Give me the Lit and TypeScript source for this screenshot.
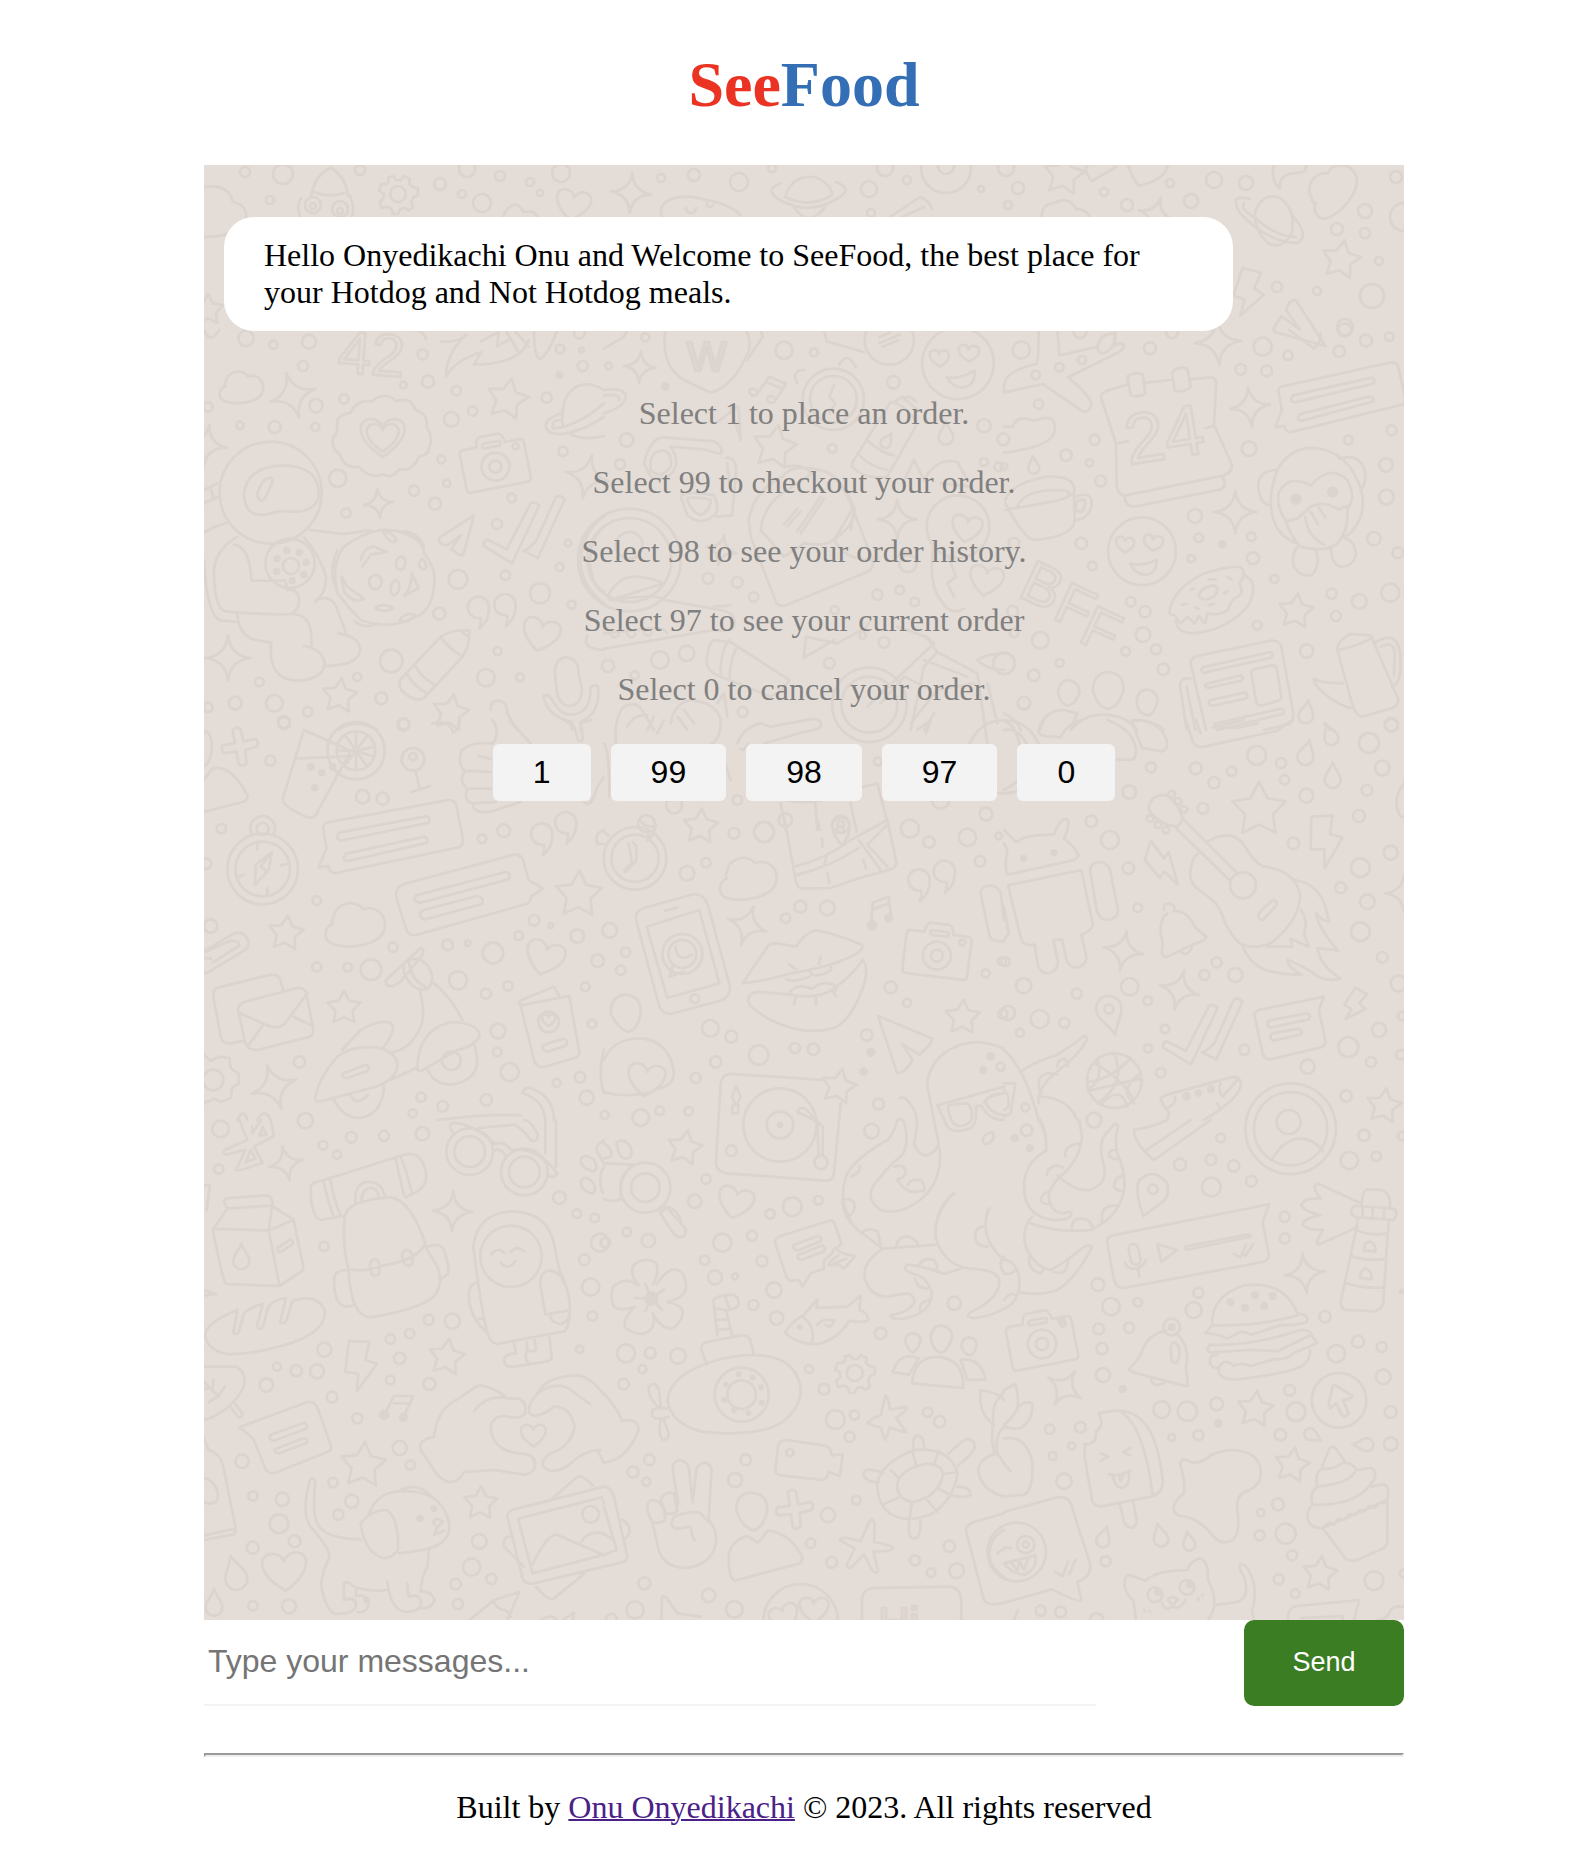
import { LitElement, html, svg, css } from "lit";
import { customElement, property, state } from "lit/decorators.js";

type Num = number[];
interface Tile {
  at: [number, number];
  scale?: number;
  rings: Num[];
  dots?: Num[];
  stars?: Num[];
  sparks?: Num[];
  marks?: [keyof typeof SHAPES, number, number, number, number][];
  words?: [string, number, number, number, number][];
  paths?: string[];
}

// Doodles drawn round their own centre, placed with x, y, turn and scale.
const SHAPES = {
  heart: "M0 45C-66 2-58-40-30-42C-12-43-2-32 0-22C2-32 12-43 30-42C58-40 66 2 0 45Z",
  drop: "M0-34C6-14 22-2 22 14A22 22 0 0 1-22 14C-22-2-6-14 0-34Z",
  bolt: "M-30-74L30-70L16-18L50-4L-12 74L-6 22L-44 16Z",
  quote: "M-2 26A32 32 0 1 1 31-4Q32 34 2 58Q8 44 6 26Z",
  camera:
    "M-85-55H-45Q-42-84-28-84H25Q38-84 42-55H85Q98-55 98-42V62Q98 75 85 75H-85Q-98 75-98 62V-42Q-98-55-85-55ZM-42 12A42 42 0 1 0 42 12A42 42 0 1 0-42 12ZM-18 12A18 18 0 1 0 18 12A18 18 0 1 0-18 12ZM-22-62H22Q28-62 28-56Q28-48 22-48H-22Q-28-48-28-56Q-28-62-22-62ZM62-36A9 9 0 1 0 80-36A9 9 0 1 0 62-36Z",
  cloud: "M-60 14C-84 22-92 66-52 74C-6 84 84 70 90 16C92-24 56-46 26-32C-2-62-54-48-60-4C-64 0-64 8-60 14Z",
  note: "M-34 34L-22-34L40-36L30 32M-24-14L36-16M-34 34A14 11 0 1 1-62 34A14 11 0 1 1-34 34M30 32A14 11 0 1 1 2 32A14 11 0 1 1 30 32",
  face: "M-96 0A96 96 0 1 0 96 0A96 96 0 1 0-96 0ZM-48 4C-84-20-76-42-60-42C-52-42-48-34-48-30C-44-42-22-42-22-24C-22-10-38-2-48 4ZM30-2C-4-24 2-48 20-48C28-48 30-38 32-34C36-46 60-46 60-28C60-14 42-6 30-2ZM-34 34Q0 44 42 24Q40 66 6 66Q-22 62-34 34Z",
  gear: "M-14-54L-6-42H8L18-54L36-46L34-30L46-20L60-18V4L46 10L40 24L46 40L32 50L18 42L6 46L0 60H-16L-20 44L-34 38L-50 42L-56 24L-44 14V-2L-58-10L-52-30L-36-30L-28-38L-30-50ZM-24 0A24 24 0 1 0 24 0A24 24 0 1 0-24 0Z",
  chat: "M-186-40Q-192-58-170-62L166-124Q186-126 190-110L208-14Q210 6 194 10L-150 82Q-170 84-172 62L-200 66L-178 12ZM-142-32L102-78Q118-78 112-60L-136-10Q-156-14-142-32ZM-124 28L96-20Q112-18 108-4L-116 48Q-136 48-124 28Z",
  plane: "M-70 16L50-62L14 70Q8 78-2 72L-28 54L6 6L-44 42Q-74 34-70 16Z",
  ticks: "M-118 56Q-122 42-108 36L-50 66L22-72Q34-80 48-66L-34 108ZM12 66L38 42L98-92Q112-98 124-84L44 92L0 70Z",
  pin: "M0 66C-10 26-44 8-42-26A42 42 0 0 1 42-26C44 8 10 26 0 66ZM-15-24A15 15 0 1 0 15-24A15 15 0 1 0-15-24Z",
  cross: "M-12-48Q-2-60 10-48L12-12L46-14Q56-4 46 8L12 12L10 48Q0 58-12 48L-12 12L-46 10Q-56 0-46-12L-12-12Z",
};

function starPath(x: number, y: number, r: number, turn: number): string {
  const pts: string[] = [];
  for (let i = 0; i < 10; i++) {
    const a = ((turn + i * 36 - 90) * Math.PI) / 180;
    const d = i % 2 ? r * 0.52 : r;
    pts.push(`${(x + d * Math.cos(a)).toFixed(1)} ${(y + d * Math.sin(a)).toFixed(1)}`);
  }
  return `M${pts.join("L")}Z`;
}

const sparkPath = (r: number) => {
  const k = r * 0.1;
  return `M0 ${-r}Q${k} ${-k} ${r} 0Q${k} ${k} 0 ${r}Q${-k} ${k} ${-r} 0Q${-k} ${-k} 0 ${-r}Z`;
};

const TILES: Tile[] = [
  {
    at: [0, 0],
    scale: 1,
    rings: [
      [41, 7, 5], [79, 9, 10], [66, 35, 4], [156, 5, 5], [236, 19, 6], [258, 29, 4], [278, 38, 9], [263, 4, 8],
      [296, 11, 5], [326, 17, 4], [357, 8, 9], [336, 28, 3], [457, 13, 4], [490, 10, 6], [535, 17, 9], [568, 3, 4],
      [665, 24, 8], [681, 3, 8], [703, 15, 4], [742, 3, 25], [742, 1, 8], [802, 3, 8], [777, 24, 3], [814, 23, 6],
      [804, 40, 4], [667, 48, 4], [966, 18, 4], [1010, 15, 8], [900, 27, 4], [923, 40, 6], [987, 36, 7], [1042, 18, 7],
      [1192, 12, 6], [1161, 46, 7], [1133, 64, 6], [1161, 68, 5], [1175, 96, 4], [1073, 122, 5], [1113, 126, 4],
      [1168, 131, 12], [1141, 162, 8], [1200, 52, 14], [109, 40, 8], [109, 41, 3], [136, 44, 8], [136, 46, 3],
    ],
    stars: [[860, 10, 21, 8], [1137, 95, 20, 10], [4, 145, 16, 0]],
    sparks: [[427, 28, 20, 4], [952, 50, 18, 15]],
    marks: [
      ["gear", 194, 29, 0, 0.33], ["heart", 369, 40, 10, 0.34], ["cloud", 1124, 22, -40, 0.33],
      ["bolt", 1044, 128, 10, 0.32], ["plane", 1098, 162, 90, 0.38], ["heart", 941, 4, 20, 0.4],
    ],
    paths: [
      "M0 22Q24 18 29 37Q44 40 42 55Q32 72 0 72",
      "M107 31Q112 8 127 3Q142 12 144 31M110 27Q126 34 143 27M97 33Q92 40 96 52M146 31Q152 44 147 54",
      "M582 30A24 24 0 0 1 628 28M581 32Q605 44 628 30M577 18Q560 24 574 34Q605 52 634 33Q650 24 632 17M590 42Q605 64 621 42",
      "M458 52C452 34 476 28 498 34C524 38 542 50 536 54M482 43A5 5 0 1 0 492 43M503 38A3 3 0 1 0 509 40",
      "M298 54Q304 38 314 40L320 47Q332 44 334 54M686 52L716 32Q724 34 728 44M698 52L720 42",
      "M838 54Q836 40 850 38Q864 30 872 44Q884 44 886 54M884 0Q878 4 888 16L912 2M1070 0Q1066 14 1076 24Q1074 10 1090 8Q1104 8 1102 0",
      "M1051 47Q1058 28 1074 32Q1092 42 1088 68Q1078 86 1064 78Q1050 66 1051 47M1046 34Q1024 28 1036 48Q1064 78 1094 78Q1106 70 1088 50M1040 38Q1036 44 1050 52Q1072 72 1092 72",
    ],
  },
  {
    at: [0, 165],
    rings: [
      [126, 25, 23], [208, 44, 12], [315, 35, 21], [297, 108, 15], [336, 227, 20], [12, 231, 14], [108, 286, 11],
      [212, 291, 18], [334, 291, 12], [420, 207, 14], [656, 73, 15], [598, 165, 10], [672, 155, 18], [757, 182, 14],
      [1028, 203, 15], [806, 243, 14], [742, 268, 22], [1068, 57, 13], [1132, 60, 7], [1136, 108, 15], [1077, 364, 14],
      [712, 388, 12], [728, 460, 11], [630, 482, 15], [693, 521, 18], [426, 549, 14], [401, 445, 26], [923, 504, 13],
      [879, 582, 15], [1092, 639, 10], [1067, 711, 12], [904, 736, 14], [762, 748, 28], [1008, 790, 30], [1103, 824, 12],
      [706, 851, 18], [881, 963, 12], [846, 1043, 26], [948, 1042, 12], [562, 993, 34], [460, 1041, 12], [532, 1105, 18],
      [166, 1056, 13], [94, 1119, 19], [211, 1120, 25], [311, 1145, 14], [240, 1176, 18], [600, 1182, 16], [12, 1132, 14],
      [1126, 10, 16], [200, 488, 153], [261, 708, 24], [258, 700, 74],
    ],
    dots: [
      [1067, 136, 12], [248, 661, 11], [286, 667, 11], [219, 686, 11], [306, 697, 11], [218, 724, 11], [299, 734, 11],
      [265, 752, 11],
    ],
    stars: [[910, 208, 64, 12], [407, 1098, 54, 6], [740, 1148, 56, 10]],
    sparks: [[266, 196, 70, -16], [8, 345, 60, 8], [524, 520, 44, -6], [1150, 440, 66, 12], [72, 984, 68, 0]],
    marks: [
      ["cloud", 110, 162, 4, 0.76], ["camera", 872, 398, -11, 1], ["heart", 536, 322, 0, 1.3], ["heart", 536, 322, 0, 0.95],
      ["plane", 766, 610, 0, 0.88], ["ticks", 958, 592, 0, 1], ["quote", 824, 838, 0, 1], ["quote", 904, 830, 0, 1],
      ["heart", 1010, 914, 14, 1.1],
    ],
    words: [["42", 498, 134, 180, 4]],
    paths: [
      "M0 0Q12 30 30 20L46 0M622 0Q660 0 666 28M710 34Q760 40 786 14Q724 74 726 140Q748 94 832 66L810 104Q950 102 974 30M830 34L884 6L880 48L920 26L940 62M904 0L940 60M930 0L974 50M990 0Q990 88 1010 86Q1034 70 1060 0",
      "M540 198Q564 198 576 214Q620 198 634 240Q672 250 668 290Q690 330 676 350Q676 376 646 378Q626 426 586 418Q560 450 536 432Q500 450 464 410Q420 416 410 376Q376 350 390 318Q400 312 400 290Q392 256 440 248Q460 206 504 214Q520 198 540 198Z",
      "M120 490Q130 408 240 406Q350 410 344 500Q330 550 260 544Q220 540 188 554Q120 562 120 490ZM160 490Q176 444 198 442Q214 448 198 472L182 506Q164 524 160 490ZM0 480L40 460M0 520L44 500M20 474L30 506",
      "M0 608Q30 588 66 580M100 620Q34 660 30 720Q30 840 66 844Q200 856 260 852Q290 840 284 800Q280 776 250 780L244 752L142 752Q138 650 90 644M316 600L420 612L500 600M300 622Q350 680 366 740Q366 790 334 816M336 810Q384 790 400 840L426 908M404 910Q470 920 468 964Q458 1006 366 1008M100 852Q104 930 180 934L202 938Q190 1046 276 1052Q358 1050 362 1000Q356 956 300 948M260 852Q324 850 322 930L322 948M0 690Q10 880 60 872L98 876",
      "M420 650Q540 560 640 630Q660 650 660 670Q700 720 690 770Q680 850 630 862Q560 902 470 870Q430 830 400 790Q380 700 420 650ZM400 660Q370 730 400 780M470 690Q480 650 510 650L548 666L500 674L474 710M536 602Q560 602 578 630Q560 650 536 602M600 604Q640 606 660 650M412 740L430 770L480 806Q450 824 420 784ZM514 834Q540 814 568 836Q540 850 514 834M624 730L644 774L600 798Q624 770 624 730M450 872Q480 900 520 880M586 872Q604 844 634 856Q610 884 586 872",
      "M495 756A18 20 0 1 0 533 756A18 20 0 1 0 495 756M576 698A14 20 10 1 0 604 702A14 20 10 1 0 576 698M561 770A12 22 10 1 0 585 776A12 22 10 1 0 561 770M644 702Q656 670 668 710Q656 730 644 702",
      "M588 1050L710 920Q750 896 796 902Q800 940 776 980L660 1104Q640 1116 610 1096Q580 1076 588 1050ZM710 922Q740 960 776 980M634 1008Q650 1040 694 1066M610 1034Q630 1070 670 1090M776 908L792 920",
      "M1200 180Q1130 140 1090 196Q1070 230 1076 290M1076 248Q1010 270 1030 300Q1050 322 1110 304Q1160 290 1200 260M1070 270Q1040 270 1048 296Q1120 290 1200 220M1092 308Q1130 334 1200 318",
      "M1200 560Q1130 610 1130 700Q1134 770 1200 820M1200 590Q1160 620 1158 700Q1164 770 1200 786M1150 916Q1130 956 1200 960",
      "M1052 1020Q1060 980 1090 982Q1124 990 1124 1030L1134 1080Q1130 1126 1096 1128Q1066 1126 1058 1084ZM1018 1098Q1030 1090 1042 1106Q1080 1180 1140 1140Q1160 1120 1160 1072Q1170 1060 1182 1070Q1190 1150 1130 1176V1200M1018 1098Q1030 1160 1104 1176V1200M860 1140Q860 1110 884 1112Q910 1116 910 1150L940 1200M400 1200Q460 1164 520 1200",
    ],
  },
  {
    at: [400, 165],
    rings: [
      [124, 22, 12], [540, 61, 26], [630, 67, 12], [868, 157, 19], [68, 330, 20], [48, 403, 15], [14, 108, 10],
      [685, 355, 13], [1140, 287, 20], [1140, 396, 12], [1184, 410, 13], [312, 745, 16], [400, 757, 16], [449, 801, 14],
      [820, 794, 15], [887, 780, 13], [932, 816, 13], [840, 937, 16], [776, 916, 10], [676, 1000, 16], [168, 990, 26],
      [248, 970, 23], [12, 1008, 18], [92, 1036, 12], [416, 1146, 15], [400, 1410, 14], [1146, 1452, 19], [210, 1426, 24],
      [822, 1295, 12], [688, 208, 92], [688, 208, 70], [796, 1124, 112], [796, 1124, 84], [76, 690, 154], [76, 690, 126],
      [76, 646, 40], [1198, 328, 18], [1062, 590, 94], [912, 700, 26], [692, 840, 12], [710, 1483, 26], [710, 1483, 10],
      [1200, 1280, 110], [856, 30, 74], [1010, 1410, 26], [544, 1470, 20],
    ],
    dots: [[184, 169, 13]],
    stars: [[512, 352, 68, 10], [290, 1490, 54, 4]],
    sparks: [[108, 111, 48, 4], [880, 568, 58, 0], [352, 660, 46, 12]],
    marks: [
      ["face", 1062, 100, -6, 1.12], ["drop", 1026, 308, 0, 1], ["note", 500, 176, 24, 0.9], ["heart", 1088, 596, 10, 0.9],
      ["heart", 1146, 752, 10, 1], ["drop", 850, 330, 30, 0.7], ["quote", 128, 1486, 0, 0.8],
    ],
    words: [["W", 308, 122, 126, 0]],
    paths: [
      "M826 22L860 6M826 40L886 14M836 50L884 30",
      "M184 0Q170 110 240 150L320 188Q380 170 416 100L436 60Q440 20 424 0M430 90L476 20L470 0M0 56L60 20L70 0",
      "M660 0L668 34L780 66M580 160Q560 120 600 120M706 104Q730 60 756 112M690 166L676 200L694 220L676 250",
      "M120 400Q140 320 180 322L330 334Q360 350 350 372L300 358L200 350Q220 380 216 404Q200 460 140 440ZM140 390Q150 360 180 362Q206 370 200 410Q170 450 140 420ZM230 500Q240 480 330 496Q350 540 330 556Q290 590 250 556ZM250 504Q290 500 320 510Q320 540 290 556Q256 540 250 504M366 384Q400 380 396 430L384 556L336 560M370 400L376 460M0 180Q60 170 66 200Q60 232 0 250M0 196Q50 190 46 210",
      "M550 410Q600 400 620 430M434 570Q450 480 536 440Q560 400 650 420Q700 430 740 520L806 690Q814 716 780 730L546 826Q526 832 516 816L440 620ZM470 600Q480 520 550 480L640 420Q700 420 750 530L690 630Q660 650 600 640L540 680ZM750 530Q760 580 690 628Q720 690 806 690M750 540L740 600M540 584L580 536M550 590L590 544M580 604L650 500M590 610L660 506",
      "M744 400L806 300L860 216Q900 220 940 280L850 440Q780 450 744 410ZM790 330Q830 370 870 376M766 376Q800 410 850 420M870 216L896 200L940 240M900 210Q910 190 936 214",
      "M380 230L410 330L404 230ZM400 230L340 276M896 460L930 390L960 450Q1000 380 1060 396L1090 450M880 680Q900 650 920 680M990 640Q970 760 1010 810Q1040 860 1080 836M1034 680L1056 740L1030 760L1050 800M1010 460L1100 470",
      "M20 810Q170 790 180 810L350 840Q400 850 390 890Q380 906 330 900L0 956M0 910L130 896Q180 890 190 910M330 830L380 826M20 910A12 12 0 1 0 44 910M70 910A12 12 0 1 0 94 910M120 905A12 12 0 1 0 144 905M40 760Q80 720 180 760L20 810Q0 800 40 760",
      "M330 930Q310 940 308 1000Q310 1020 340 1036L500 1100Q540 1080 556 1050L380 936ZM376 930Q350 960 350 1030M400 950Q380 980 376 1050M600 980L606 920L700 940L780 896M600 984L690 930M780 900L800 870",
      "M36 1240Q30 1160 60 1130Q100 1110 120 1150L150 1200M70 1190Q90 1150 130 1156M200 1180Q210 1120 260 1110Q340 1120 350 1170Q350 1230 320 1242M220 1160L250 1200M240 1140L270 1180M150 1160L130 1200M180 1170L160 1210M340 1120L360 1090L370 1160",
      "M400 1240Q420 1190 470 1180L500 1190L630 1166Q656 1170 650 1190Q640 1200 600 1206L480 1240M410 1256Q416 1270 430 1242",
      "M880 890L966 920L990 940L800 1120L790 1130M966 920L1000 966L960 1010L920 1200M1000 966L1120 1030L1150 1240M920 1180L1000 1080L1110 1060M960 990L1090 1040M1120 990Q1150 970 1200 970M1120 990Q1150 1020 1200 1020M980 1080L900 1040L830 1120M1150 1060L1180 1180M940 1200L980 1170L966 1210",
      "M530 1420L546 1500M540 1410Q640 1430 700 1390L820 1360L856 1500M634 1420L640 1500M740 1420L756 1500M360 1290L380 1350M960 1200L990 1150M0 1240Q16 1260 16 1400",
    ],
  },
  {
    at: [800, 165],
    rings: [
      [52, 60, 26], [234, 90, 12], [166, 112, 13], [95, 135, 13], [104, 223, 14], [438, 55, 18], [228, 4, 20],
      [504, 6, 18], [272, 329, 15], [186, 376, 17], [256, 399, 11], [290, 453, 16], [776, 50, 27], [852, 76, 14],
      [710, 118, 16], [788, 123, 16], [1006, 64, 17], [1086, 32, 18], [1156, 20, 13], [1163, 301, 15], [1033, 330, 13],
      [735, 356, 22], [1146, 405, 20], [1147, 501, 22], [573, 558, 21], [584, 623, 13], [742, 620, 13], [747, 685, 18],
      [562, 686, 11], [1110, 626, 20], [1181, 668, 16], [232, 640, 17], [265, 708, 13], [380, 815, 14], [423, 845, 17],
      [811, 747, 12], [983, 791, 15], [1066, 814, 22], [1159, 788, 27], [996, 858, 15], [760, 886, 13], [109, 931, 25],
      [417, 914, 22], [365, 964, 13], [456, 958, 15], [167, 999, 12], [89, 1036, 17], [478, 1018, 17], [60, 1119, 19],
      [908, 963, 20], [1162, 1184, 20], [30, 640, 16], [26, 844, 16], [0, 1000, 32], [30, 908, 13], [0, 410, 10],
      [1022, 0, 20],
    ],
    dots: [[655, 643, 13], [876, 508, 17], [986, 486, 17]],
    stars: [[876, 844, 54, 6]],
    sparks: [[642, 36, 70, -3], [738, 230, 60, -6], [694, 546, 64, 0]],
    marks: [
      ["chat", 1004, 222, -2, 0.96], ["drop", 88, 404, -6, 0.76], ["face", 414, 664, 0, 1.06], ["drop", 908, 1144, 10, 1],
    ],
    words: [["24", 492, 386, 214, -9], ["B", 91, 821, 176, 25], ["F", 188, 885, 176, 25], ["F", 266, 955, 176, 25]],
    paths: [
      "M104 0Q104 100 96 102Q20 120 4 150Q0 160 0 188L116 162L236 244Q258 250 262 220Q252 190 192 142L350 64Q370 44 350 40L334 46L334 0M160 0L166 76L280 50Q290 10 330 10Q340 50 300 70Q280 70 280 50",
      "M0 290L26 290Q40 252 90 272Q160 246 152 300Q150 350 0 368",
      "M370 164L310 182Q286 190 292 206L336 340L338 460Q340 500 366 496L660 436Q690 424 682 400L630 284L636 170Q640 140 620 142L560 148M426 158L500 150M370 140Q390 124 416 132L424 190Q406 204 380 196ZM504 130Q520 106 550 116L560 170Q540 190 512 182ZM340 340L372 334M604 294L628 288M362 500Q364 530 390 530L650 478Q670 470 656 440",
      "M4 510Q20 460 130 440Q220 436 210 490L212 570Q210 620 90 630Q60 626 4 520M4 540L160 512Q200 500 210 488M40 530Q60 480 160 480Q210 480 190 500M214 500Q270 480 262 530Q250 570 214 570M214 530Q220 504 240 510Q250 520 234 544Q220 550 214 530",
      "M496 850Q500 780 600 730Q700 700 716 716Q724 740 706 760Q722 790 700 800Q680 810 672 840Q640 860 610 850L604 880L584 858L572 880L550 860L530 880L514 858ZM516 870Q516 910 570 910Q670 900 730 830Q760 780 740 750L716 730M584 800Q590 770 630 766Q650 776 630 800Q600 816 584 800M560 780L568 776M614 748H636M670 740L684 750M660 790L670 784M614 826L630 822M574 832L584 836M534 824L548 822",
      "M820 420Q860 350 930 354Q1010 360 1050 430Q1090 500 1070 560Q1050 610 1020 620M820 420Q790 500 806 560Q820 620 880 640M816 420Q756 424 764 480Q770 520 796 526M1006 386Q1070 366 1084 430Q1084 470 1070 480M846 574Q816 530 824 490Q850 430 920 466Q980 400 1030 450Q1056 500 1034 530Q1020 526 1006 540Q960 510 920 530L880 566ZM846 574Q860 620 890 650Q960 670 1000 640Q1036 600 1030 530M904 560Q910 620 960 644M920 546L942 582M944 532L964 562M880 650Q860 680 870 710Q890 744 924 734Q950 710 936 660M980 650Q980 700 1010 710Q1050 710 1056 670Q1050 630 1020 624",
      "M560 1000Q560 980 590 976L800 932Q826 930 832 950L868 1150Q870 1180 850 1184L780 1200M560 1000L606 1200M560 1046Q530 1040 528 1066L548 1200M548 1070L574 1200M596 1012L800 966Q812 974 800 984L600 1028Q586 1022 596 1012M606 1062L710 1036Q722 1044 712 1052L612 1074Q600 1070 606 1062M618 1110L724 1088Q736 1096 726 1106L624 1128Q610 1122 618 1110M742 1030Q742 1016 760 1016L806 1006Q816 1008 818 1016L832 1100Q830 1112 816 1114L774 1126Q758 1128 756 1112ZM630 1182L830 1136Q846 1140 836 1152L640 1200",
      "M1000 960Q1000 930 1040 912L1100 916L1184 1110Q1180 1130 1160 1136L1074 1160Q1056 1160 1044 1120ZM1000 960Q1060 950 1106 922M1016 1060Q950 1060 930 1046Q926 1060 960 1090Q1010 1130 1042 1134M1116 936Q1180 900 1188 970Q1196 1060 1164 1070M1130 950Q1170 930 1172 970L1170 1036",
      "M856 0L930 56Q950 40 950 10M162 1090Q166 1050 196 1050Q230 1060 226 1090Q210 1128 190 1128Q170 1120 162 1090ZM266 1080Q270 1026 314 1026Q362 1030 358 1084Q340 1136 310 1136Q280 1130 266 1080ZM398 1116Q400 1080 430 1078Q464 1086 460 1116Q450 1156 430 1156Q400 1150 398 1116ZM104 1200Q120 1140 180 1140L220 1150L200 1200M200 1200Q240 1150 310 1154Q370 1160 400 1200M384 1170Q450 1170 480 1200M0 1150Q40 1170 50 1200M960 1180L980 1200",
    ],
  },
  {
    at: [0, 555],
    rings: [
      [240, 10, 18], [199, 122, 15], [598, 14, 18], [476, 230, 20], [536, 236, 18], [52, 326, 14], [6, 431, 16],
      [338, 542, 13], [20, 618, 20], [567, 682, 14], [338, 741, 14], [431, 742, 13], [501, 749, 31], [731, 675, 16],
      [791, 670, 8], [867, 699, 31], [762, 781, 27], [846, 821, 15], [912, 798, 14], [834, 356, 13], [899, 332, 19],
      [990, 601, 16], [1040, 617, 7], [944, 647, 13], [1120, 648, 20], [1181, 722, 19], [1144, 800, 13], [1164, 911, 13],
      [882, 933, 22], [880, 996, 13], [917, 1056, 27], [1058, 1088, 12], [1128, 1072, 16], [1148, 1133, 21],
      [286, 1026, 17], [651, 1132, 14], [716, 1159, 16], [847, 1139, 17], [626, 1180, 12], [27, 1080, 31],
      [176, 447, 106], [176, 447, 82], [176, 327, 18], [627, 118, 34], [627, 110, 11], [456, 92, 86], [456, 92, 58],
      [742, 1022, 28], [1034, 906, 31],
    ],
    dots: [[320, 141, 12], [353, 158, 11], [386, 140, 11], [332, 203, 11]],
    stars: [[1124, 524, 72, 2], [246, 640, 54, 6], [420, 864, 52, 0]],
    sparks: [[210, 1100, 70, -18]],
    marks: [
      ["cross", 108, 80, -10, 1.08], ["quote", 1014, 348, 0, 1], ["quote", 1086, 314, 0, 1], ["chat", 556, 372, 0, 1.06],
      ["cloud", 450, 600, 3, 1.04], ["heart", 1022, 714, 16, 1.14], ["heart", 1034, 900, 0, 0.4],
    ],
    paths: [
      "M0 34Q24 36 24 80Q20 130 0 138M0 180L24 146Q80 130 130 226Q134 240 116 246L0 276",
      "M300 30L440 92L336 284Q328 296 310 292Q234 260 236 236ZM276 116L440 108M456 92L400 92M456 92L424 46M456 92L456 36M456 92L490 46M456 92L512 80M456 92L510 110M456 92L490 140M456 92L456 148M456 92L420 140",
      "M634 152L648 210M622 216L678 198M866 70Q800 64 772 92Q760 140 784 152Q760 180 790 206Q776 240 806 250Q810 290 876 270L950 246M784 152L860 156M790 206L860 206M806 250L876 246M824 108L860 116M866 70Q890 40 866 0M916 0Q960 50 980 70M684 10Q740 0 746 36Q760 40 768 0M1080 0L1110 20L1122 60Q1140 70 1136 50L1130 10L1160 0M1080 110Q1110 96 1120 140M1140 246Q1160 270 1180 200L1200 170M1200 330Q1170 340 1180 372H1200",
      "M144 344A37 37 0 1 1 208 344M204 396L194 450L152 496L156 434ZM160 370V388M190 504V522M104 470L118 464M232 436L248 432M204 396L170 440L190 456",
      "M576 530Q574 500 600 492L930 404Q956 402 960 430L974 480L1018 506L982 528Q980 550 960 554L640 644Q614 650 606 626ZM636 526L904 456Q924 456 914 478L650 548Q622 546 636 526ZM652 572L820 528Q842 532 834 552L664 598Q640 594 652 572Z",
      "M0 694L90 640Q120 630 134 664Q134 684 120 692L24 750Q10 762 0 758M8 694L80 662Q110 664 104 678L26 728M0 714L20 716",
      "M28 830Q26 808 44 802L200 764Q228 762 232 790L238 810M28 830L50 950Q56 972 80 970L122 962M102 872Q104 850 120 846L280 804Q302 800 308 824L328 930Q328 948 310 952L160 990Q130 990 124 968ZM108 880L200 920Q236 928 250 900L310 820M176 916L132 978M268 890L326 918",
      "M546 780L650 684Q664 690 654 706L590 784Q556 810 546 790ZM598 730Q640 700 670 736Q700 780 670 806Q630 820 600 760ZM614 720Q620 780 664 800M648 814Q670 900 640 940Q610 990 566 996M690 790Q740 830 776 900M414 990L470 930Q530 896 560 910Q580 924 540 980M334 1130Q346 1070 400 1010Q440 976 520 982Q590 1000 578 1050Q560 1090 500 1104L350 1144Q330 1146 334 1130ZM418 1060L486 1034Q502 1040 488 1054L430 1074Q408 1074 418 1060ZM640 1050Q640 930 740 906Q830 910 826 950Q810 980 760 990L650 1054ZM560 1080L636 1044M672 1050Q690 1094 744 1094Q820 1080 820 1020L812 976M390 1140Q420 1196 470 1194Q540 1180 540 1090M440 1126Q456 1160 492 1126",
      "M950 856Q940 850 952 840L1050 800L1066 828M950 856L1096 828L1126 996Q1126 1010 1110 1014L1016 1042Q996 1040 990 1020ZM1016 978Q1040 966 1080 956Q1096 966 1084 978L1034 994Q1014 996 1016 978M956 1120Q960 1100 980 1104Q1050 1130 1050 1200M956 1120Q1020 1140 1024 1200M1200 990Q1180 1060 1200 1120M700 1200Q860 1180 950 1186",
      "M0 1006L20 1022L46 1010L76 1014L80 1044L104 1062V1090L84 1104L80 1134L50 1146L30 1136L0 1150M100 1200Q120 1160 130 1200M160 1200Q180 1160 200 1200",
    ],
  },
  {
    at: [400, 655],
    rings: [
      [390, 40, 16], [306, 128, 14], [249, 160, 22], [480, 36, 30], [589, 260, 18], [545, 295, 14], [670, 264, 22],
      [918, 26, 27], [975, 66, 17], [1090, 52, 26], [1128, 124, 16], [1184, 48, 10], [17, 331, 22], [65, 397, 14],
      [50, 451, 14], [860, 502, 18], [909, 548, 12], [1145, 460, 12], [1194, 424, 12], [319, 625, 25], [382, 650, 18],
      [464, 705, 29], [573, 684, 15], [628, 688, 17], [788, 645, 17], [335, 726, 17], [275, 774, 15], [824, 852, 16],
      [803, 933, 22], [110, 893, 25], [167, 872, 13], [254, 874, 13], [2, 885, 12], [306, 1077, 14], [272, 1144, 20],
      [565, 1160, 28], [643, 1141, 13], [498, 1182, 14], [382, 992, 16], [651, 1027, 20], [93, 115, 94], [93, 115, 71],
      [528, 915, 110], [528, 915, 40], [124, 1103, 75], [124, 1103, 43], [272, 536, 13], [709, 28, 10], [1190, 740, 12],
      [1196, 582, 14], [235, 402, 60], [235, 402, 42],
    ],
    dots: [[801, 697, 14], [779, 755, 13], [528, 915, 10], [1160, 709, 13], [1138, 750, 12], [804, 316, 16], [854, 294, 14]],
    stars: [[1076, 592, 54, 2], [242, 984, 54, 10], [704, 800, 54, 12]],
    sparks: [[430, 316, 60, 18]],
    marks: [
      ["quote", 946, 186, 0, 1], ["quote", 1022, 160, 0, 1], ["camera", 1000, 395, 7, 1], ["cloud", 428, 162, 0, 1],
      ["heart", 394, 1148, 14, 1.05], ["heart", 126, 780, 8, 1.1],
    ],
    paths: [
      "M86 66L96 78L98 120L64 156M74 70L84 130L60 150M108 0Q120 24 156 20L150 0M0 36L14 46",
      "M542 0L576 186Q580 206 600 206L680 204L760 176L860 148Q882 140 876 120L850 0M570 140Q660 120 740 60L850 0M574 166Q680 140 764 84M764 60L830 150M790 74L850 140M790 74L850 14M640 0L648 30M654 56L656 80M754 10L758 36M670 160L676 190M778 120L786 146M668 110L660 136M684 20A25 25 0 0 1 738 20Q736 50 714 76Q690 50 684 20Z",
      "M96 300Q92 278 114 266L270 222Q300 222 312 256L378 500Q380 526 356 540L200 582Q176 582 166 560ZM128 320L286 270L346 490L190 534ZM184 272L220 262M196 470L206 440M196 470L240 454M214 380Q220 430 264 404",
      "M802 316L806 248L854 230L862 294M806 268L856 250",
      "M416 490L490 380Q500 366 530 372L576 380Q610 330 640 332Q690 340 774 374Q782 390 740 410Q680 440 560 460Q500 480 416 490ZM432 540Q436 514 470 516L560 524Q640 540 690 506Q740 470 776 420Q800 450 770 520Q740 600 690 624Q600 650 500 600Q430 560 432 540ZM546 476Q560 490 616 470M616 450Q620 474 660 462Q690 450 680 440M556 520Q570 496 600 500L626 506Q650 480 690 494L696 510M556 434L576 448M650 410L644 432M576 530L570 554M636 534V556M686 512L696 528",
      "M1130 220Q1130 196 1160 198Q1180 196 1190 220L1200 300M1130 220L1156 346Q1160 366 1200 364M20 580Q20 526 66 524Q114 530 110 580Q100 630 74 636Q40 626 20 580ZM0 720Q30 650 120 656Q200 670 210 760Q206 800 160 806M0 816Q60 834 140 818",
      "M822 588L986 656Q980 676 946 704L894 672L926 720Q906 756 880 760Z",
      "M660 780L384 762Q356 760 350 790L336 1020Q332 1054 370 1060L660 1082Q688 1084 690 1060L710 850M384 830L396 798L410 832L396 856ZM386 856L384 880H402L404 856M580 876Q590 856 606 868L640 904L656 920V1006M624 896L640 910L644 1006M580 876L630 900",
      "M1200 686Q1100 640 1020 700Q970 740 970 800L1004 970Q1020 1060 970 1120Q900 1190 830 1170Q786 1140 806 1100Q860 1030 890 1010Q916 980 904 920Q896 890 880 900Q870 940 850 960Q760 1010 730 1060Q700 1130 740 1200M886 836Q900 820 924 860Q950 890 930 970Q940 1004 966 1006Q996 1000 1004 970M1000 856L1200 800M1000 856L1030 920Q1050 944 1100 924Q1120 910 1116 860Q1130 850 1140 870Q1160 900 1200 900M1032 862Q1030 852 1090 850Q1104 860 1104 890Q1100 914 1070 918Q1040 920 1032 862ZM1140 850Q1150 820 1200 820Q1140 830 1146 850Q1160 880 1200 886M1136 960Q1140 940 1166 936Q1176 960 1150 972Q1136 974 1136 960M870 1040Q900 1030 906 1054Q900 1076 884 1076M880 1080Q910 1130 960 1110M910 1096Q920 1074 950 1080Q966 1096 960 1116M740 1070Q770 1060 768 1038M716 1140Q750 1130 752 1160Q750 1186 726 1190M1000 1200Q1010 1150 1050 1120M1150 1170L1146 1200",
      "M0 1030L86 1034Q40 1080 52 1136Q30 1150 0 1136M40 980Q30 960 60 962Q90 980 80 1010Q50 1030 40 980M0 970Q30 990 20 1010L0 1016M170 1180L190 1160Q220 1170 230 1200",
    ],
  },
  {
    at: [800, 555],
    rings: [
      [441, 142, 15], [376, 216, 20], [575, 145, 18], [683, 154, 14], [630, 188, 17], [758, 106, 28], [831, 129, 15],
      [842, 179, 14], [597, 265, 16], [262, 304, 17], [318, 360, 27], [373, 445, 17], [401, 563, 13], [907, 227, 21],
      [868, 370, 17], [1095, 69, 30], [1135, 144, 22], [1162, 16, 19], [1089, 211, 16], [1065, 288, 18], [1160, 398, 21],
      [1069, 443, 28], [1010, 503, 16], [1090, 545, 22], [1069, 635, 28], [1135, 712, 16], [1184, 790, 24], [638, 727, 15],
      [601, 765, 15], [694, 765, 21], [59, 797, 23], [218, 821, 15], [377, 800, 26], [431, 842, 13], [12, 879, 21],
      [107, 897, 27], [181, 909, 15], [48, 938, 12], [483, 927, 13], [432, 985, 12], [721, 989, 15], [470, 1058, 14],
      [1125, 930, 21], [1033, 981, 30], [911, 1040, 21], [1101, 1026, 15], [1190, 1004, 14], [1026, 1128, 17], [64, 1162, 12],
      [717, 496, 39], [331, 1082, 82], [4, 725, 13], [503, 222, 10], [522, 244, 10], [540, 268, 10],
      [438, 296, 10], [462, 314, 10], [486, 330, 10], [1194, 888, 12],
    ],
    dots: [[59, 415, 11], [150, 398, 11], [547, 1129, 13], [583, 1119, 11], [621, 1108, 12]],
    stars: [[765, 270, 84, 0], [1140, 1158, 54, 8]],
    sparks: [[358, 692, 60, 10], [526, 810, 60, 14], [1200, 520, 56, 0]],
    marks: [
      ["drop", 908, 96, 14, 1.1], ["drop", 978, 42, -20, 0.96], ["drop", 986, 164, 0, 1.1], ["bolt", 964, 364, -8, 1.06],
      ["pin", 320, 888, -14, 0.9], ["ticks", 594, 928, 0, 0.98], ["bolt", 1052, 856, 24, 0.66],
    ],
    paths: [
      "M0 30Q50 20 76 90M0 0Q40 20 50 90M120 0L104 36Q106 46 124 48L170 52Q190 10 230 0M310 0Q390 30 396 90Q396 120 380 120L340 118M384 6L414 84L474 94Q494 90 488 60Q470 10 410 0L384 6M546 0L566 66Q576 84 600 80L820 32L864 0M576 0L590 40M626 22L720 0M626 22L700 24L760 10M0 210Q60 180 76 120",
      "M0 330L36 366Q70 342 150 344Q170 290 190 298Q200 310 180 356Q210 376 224 406Q220 416 210 420L10 464Q0 440 10 390L0 370M12 496L232 450L266 610Q268 630 232 644L248 714Q240 746 210 742Q190 736 186 714L174 658L148 660L162 726Q160 756 130 760Q108 758 102 736L92 674Q60 680 52 660ZM258 450Q260 426 290 426Q312 430 318 450L342 570Q340 598 310 600Q284 598 278 570ZM0 560L14 640L0 660",
      "M434 266Q440 220 490 226Q530 260 536 300L520 320Q460 314 434 266ZM536 296L702 462M512 320L680 484M612 364Q680 324 720 374Q750 430 780 440Q870 450 888 520Q890 600 800 670Q740 694 700 664Q670 630 656 590Q646 550 600 520Q550 490 560 450Q564 410 584 400M764 580L806 540Q824 540 814 560L776 600Q760 598 764 580M870 480Q960 490 974 606Q950 600 936 580Q940 620 1002 692Q960 686 940 684Q950 740 1010 776Q960 790 920 754Q880 730 850 720Q850 740 892 764Q840 764 800 754Q740 740 714 674M890 570Q914 600 900 640L914 680L860 656L864 680L790 680",
      "M440 362L422 420L468 474L480 454L522 494L494 396L480 416Z",
      "M480 570Q476 550 500 550Q516 560 510 574Q550 570 572 620L608 652Q600 664 570 672L490 710Q470 714 474 690Q478 670 470 640Q466 596 490 580M530 694Q550 714 564 680",
      "M750 880L764 870L960 830L944 870L964 960Q966 978 950 982L800 1018Q782 1018 776 1000ZM794 902L908 880Q924 886 914 898L798 924Q784 914 794 902ZM804 940L884 926Q900 932 890 944L808 962Q792 954 804 940Z",
      "M0 990Q60 1040 104 1200M52 1054Q80 1030 160 1004Q200 980 240 948Q254 950 246 964Q220 1010 160 1054Q100 1100 104 1150M112 1120Q90 1070 130 1060Q150 1060 160 1064M160 1040Q160 1020 180 1016Q194 1026 190 1040M104 1130Q190 1130 220 1200M0 1090H34L20 1180L0 1190M0 1110Q16 1120 14 1160L0 1170",
      "M270 1030Q350 1070 390 1140M330 1000Q370 1090 280 1150M250 1086Q320 1080 380 1014M256 1112Q350 1090 410 1076M290 1154Q350 1090 370 1160M280 1020Q300 1080 250 1110M390 1150Q340 1110 410 1060",
      "M470 1140Q470 1130 490 1124L690 1070Q716 1076 710 1100Q700 1140 600 1200M470 1140L484 1166Q520 1150 512 1130M484 1166Q500 1170 490 1200M650 1090Q640 1110 656 1130L700 1080M640 1150L650 1170",
      "M1200 190Q1160 240 1190 290H1200",
    ],
  },
  {
    at: [0, 955],
    rings: [
      [50, 27, 25], [44, 147, 14], [304, 2, 23], [442, 52, 16], [357, 76, 13], [399, 104, 12], [540, 47, 15], [655, 41, 20],
      [360, 379, 14], [1066, 233, 19], [1118, 281, 13], [1172, 294, 13], [1188, 368, 27], [1141, 419, 16], [1160, 501, 26],
      [1165, 588, 14], [1127, 688, 11], [674, 599, 15], [745, 603, 23], [617, 641, 14], [559, 657, 14], [361, 689, 21],
      [587, 715, 17], [559, 780, 13], [676, 792, 18], [219, 740, 12], [277, 752, 17], [339, 754, 21], [187, 795, 20],
      [384, 831, 16], [460, 895, 15], [587, 984, 21], [619, 1035, 14], [114, 1024, 20], [387, 1088, 14], [443, 1144, 20],
      [403, 1184, 15], [147, 1128, 14], [235, 1138, 20], [225, 1211, 28], [272, 1264, 18], [146, 1283, 18], [147, 1457, 14],
      [255, 1459, 21], [826, 1264, 22], [803, 1341, 26], [862, 1377, 15], [755, 1392, 16], [762, 1452, 15], [797, 95, 70],
      [797, 95, 46], [961, 156, 70], [961, 156, 46], [921, 409, 92], [1160, 1183, 25], [488, 1440, 6],
    ],
    dots: [[648, 1195, 11], [541, 884, 16], [598, 892, 14], [690, 1166, 10]],
    stars: [[728, 712, 56, 8], [478, 1036, 70, 4], [830, 1150, 52, 2]],
    sparks: [[246, 130, 52, -12], [746, 274, 60, 2]],
    marks: [
      ["drop", 112, 408, 0, 1.1], ["bolt", 468, 738, -2, 1.02], ["heart", 988, 946, 0, 0.74], ["heart", 242, 1354, -4, 1.3],
      ["drop", 92, 1356, -14, 1.5], ["drop", 30, 1446, 0, 1.15],
    ],
    paths: [
      "M541 884L570 828H628L598 892M570 850L620 850",
      "M106 0L130 60L62 90Q54 100 66 104L124 90L96 150Q100 156 176 128L150 80L210 48L200 0M144 20L146 40L170 0M176 20L166 46L188 44ZM140 90L126 126L154 116Z",
      "M0 196H18L8 270M0 510L36 522L0 526",
      "M60 244Q60 236 76 234L190 226Q206 232 206 256L70 266ZM70 266L28 326L194 332L204 258L268 298L298 440Q298 450 290 456L226 498L66 492Q56 480 26 328M194 332L226 496M194 332L266 300M220 384L260 358Q270 364 264 374L230 396Q218 396 220 384Z",
      "M4 650Q0 610 100 570L88 640Q100 644 104 636L120 580Q140 560 176 552L158 622Q170 632 178 616L190 570Q200 540 246 534L228 606Q240 616 248 600L266 542Q340 520 362 570Q370 630 260 670Q150 704 70 702Q12 690 4 650Z",
      "M320 200Q316 190 360 180L600 104Q650 90 664 150Q676 190 640 214L606 232M320 200Q320 290 350 300L416 288M358 184Q370 240 390 294M378 176Q390 240 410 288M574 114L600 226M590 108Q610 160 624 220M454 246Q450 190 490 186Q530 180 544 230M472 240Q476 204 500 204Q520 204 524 228M422 290Q430 240 560 232Q620 240 664 370Q640 420 540 436Q470 460 434 446Q414 380 422 290ZM434 450Q440 590 500 592Q640 570 690 530Q720 490 700 440L664 380M432 450Q390 450 390 480Q390 560 430 560L450 556M670 380Q710 366 720 390Q740 450 730 464L708 480M498 440Q496 420 512 418Q528 420 526 440V460Q510 476 502 460ZM596 414Q590 394 608 390Q624 394 626 410V430Q610 446 600 430Z",
      "M748 38Q730 20 744 8Q800 10 860 60L872 72Q900 60 920 90Q1000 80 1060 160Q1050 176 1034 168M872 92Q890 80 906 110M826 24L930 14Q950 20 980 60Q1000 70 1002 44Q980 0 960 0M1024 0V100M1056 0V140",
      "M808 380Q820 276 930 274Q1030 280 1050 370L1066 450Q1096 510 1098 560Q1098 620 1080 634L880 672Q860 670 850 640Q830 560 808 380ZM1008 490Q1010 450 1040 452Q1070 456 1080 490M1008 490L1024 584L1090 572M1038 584Q1040 610 1070 612Q1096 606 1096 580M816 490Q790 490 796 550Q810 610 850 636M820 600Q830 590 840 600M862 402Q880 380 900 398M920 396Q940 374 960 394M890 428Q910 454 934 424M930 670L936 700Q900 700 900 724Q904 744 930 740L1030 724Q1046 720 1042 700L1036 652M968 666L970 690Q990 700 996 686L992 660M968 694Q960 716 974 730",
      "M1200 60Q1170 80 1180 96L1200 130M1130 120Q1140 96 1170 120Q1186 150 1166 154Q1130 144 1130 120ZM1130 186Q1140 160 1170 190Q1180 220 1160 220Q1130 210 1130 186ZM1200 140Q1180 170 1196 220",
      "M0 740H96Q120 750 122 780Q124 810 80 854Q40 890 0 900M80 860L104 894Q120 890 112 876L92 850M0 786L44 830M16 846L44 826L62 800M28 780L26 806L0 806",
      "M106 922L310 846Q330 842 340 862L382 980Q384 990 370 996L210 1060Q186 1060 182 1040L148 956ZM200 944L300 908Q316 914 306 926L210 962Q190 958 200 944ZM216 986L300 954Q318 958 306 970L226 1000Q206 998 216 986Z",
      "M690 950Q700 870 750 844L820 798Q850 790 908 832M690 950Q640 960 650 990L700 1064Q740 1106 770 1070L780 1056L870 1050L960 1064Q990 1060 992 1040Q1000 1000 940 1000Q870 990 860 930Q860 890 900 888Q950 900 964 880Q970 830 920 836Q850 820 810 874M1200 824Q1160 770 1120 766Q1020 770 1000 822Q970 850 976 880Q1000 900 1050 860Q1100 860 1112 920Q1100 980 1040 1000Q1010 1020 1018 1040Q1050 1070 1100 1030Q1140 990 1190 990M1000 820Q1060 780 1100 810L1158 852",
      "M0 956L14 990Q50 1000 58 1040L96 1230Q96 1240 86 1244L0 1260M0 1246L94 1226M0 1076Q10 1070 20 1084Q50 1110 38 1144Q20 1156 0 1146",
      "M318 1080Q330 1070 334 1086Q324 1180 340 1210Q360 1256 470 1258M318 1080Q290 1180 320 1220Q380 1290 376 1310Q350 1370 352 1400Q370 1484 400 1482Q460 1480 456 1450Q450 1430 420 1440V1390Q430 1380 450 1400Q500 1416 550 1410M456 1410V1430Q480 1416 494 1450Q490 1480 460 1476M550 1384Q560 1476 610 1476Q660 1470 650 1440Q640 1420 614 1430L610 1390M650 1416Q680 1410 692 1440Q680 1470 650 1464M650 1416Q650 1380 670 1340L674 1290M494 1184Q520 1110 600 1114Q700 1110 730 1190Q750 1240 710 1270Q680 1290 586 1300M470 1210Q500 1170 550 1170Q586 1200 582 1290Q560 1320 530 1312Q480 1290 470 1210M590 1110Q640 1084 684 1130M686 1206Q700 1190 716 1204L700 1222ZM700 1222L690 1244L720 1232",
      "M910 1190Q910 1174 930 1168L1200 1100M910 1190L956 1376Q964 1394 990 1390L1200 1340M942 1196L1194 1132L1200 1150M942 1196L986 1360L1200 1304M986 1332Q1030 1240 1060 1244L1200 1306M1132 1266Q1150 1230 1200 1240M1040 1140L1120 1070Q1140 1066 1166 1096M916 1250Q896 1250 900 1280L960 1340M996 1400Q1030 1440 1046 1438L1130 1370L1150 1350M796 1500L870 1440L946 1416L910 1500M870 1446Q880 1470 906 1470L920 1490M1010 1500Q1040 1480 1060 1500M1076 1500Q1090 1490 1110 1478L1106 1500M1180 990L1200 1030",
    ],
  },
  {
    at: [400, 1035],
    rings: [
      [498, 42, 14], [69, 96, 13], [133, 122, 20], [4, 128, 14], [355, 128, 27], [444, 107, 15],
      [302, 181, 14], [474, 183, 16], [333, 232, 21], [393, 229, 9], [510, 270, 23], [448, 315, 15], [518, 354, 20],
      [66, 460, 27], [139, 459, 16], [222, 468, 23], [115, 507, 12], [59, 552, 16], [615, 507, 12], [660, 567, 16],
      [694, 659, 28], [751, 645, 14], [737, 710, 15], [830, 400, 17], [971, 637, 14], [1007, 665, 17], [1051, 310, 20],
      [136, 779, 16], [87, 816, 17], [127, 845, 12], [425, 779, 16], [393, 840, 21], [757, 901, 13], [672, 945, 21],
      [620, 1030, 14], [683, 1087, 16], [933, 1081, 15], [1036, 1039, 17], [981, 1118, 13], [1058, 1112, 22],
      [121, 1150, 18], [314, 1186, 20], [93, 1230, 26], [391, 1228, 25], [22, 1258, 16], [413, 584, 81], [413, 584, 43],
      [558, 758, 11], [590, 1264, 112],
    ],
    dots: [
      [404, 523, 9], [446, 533, 9], [471, 562, 9], [473, 608, 9], [433, 639, 9], [390, 631, 9], [360, 600, 9], [366, 554, 9],
      [142, 296, 22], [587, 381, 9],
    ],
    marks: [
      ["gear", 752, 519, 0, 1], ["cross", 572, 928, -8, 1.1], ["heart", 630, 1230, 0, 0.86], ["heart", 542, 1252, -20, 0.86],
    ],
    words: [["Hi", 884, 1312, 130, 0]],
    paths: [
      "M186 20L244 86Q250 106 232 112Q220 114 208 100L166 36Z",
      "M148 252Q172 200 150 184Q110 170 86 200Q80 230 104 256Q60 226 26 262Q16 320 40 326Q70 330 92 320Q50 364 66 386Q120 420 146 380Q154 360 146 340Q180 400 214 380Q250 340 228 320Q210 310 190 306Q250 290 246 256Q240 200 200 210Q180 220 158 252M142 296L124 252M142 296L180 268M142 296L92 294M142 296L124 334M142 296L174 330",
      "M514 130Q512 114 530 108L676 62Q690 60 694 76L712 130Q700 144 690 146Q690 160 660 180V206L620 220L596 260L584 240L560 242Q550 240 544 220ZM568 136L640 108Q656 112 650 124L580 152Q568 150 568 136ZM584 164L656 136Q668 144 660 154L592 180Q576 178 584 164ZM700 150Q716 164 754 168L720 206L704 194L674 196Q680 180 704 166M690 190L726 176",
      "M714 0Q720 60 770 96L836 146L998 134M836 146Q770 190 784 240Q800 290 850 290L910 280Q936 290 930 310Q910 340 860 346Q860 360 900 356Q980 340 984 280Q970 230 930 222Q890 210 910 194Q970 200 1020 222L1070 206M1030 0Q980 70 1000 130Q1030 200 1100 206Q1190 210 1186 250Q1180 300 1100 336Q1080 350 1110 354Q1160 350 1200 326M774 100Q790 80 820 94Q830 120 828 140M876 142Q880 110 910 110Q940 116 944 140M946 194Q960 170 990 180Q1002 196 1000 216M934 236Q940 270 974 264M974 300Q940 310 950 334M1156 24Q1120 110 1200 180M1140 80Q1110 80 1114 116Q1120 140 1150 140M1200 170Q1180 190 1200 220",
      "M544 400Q550 376 600 344L640 298L638 324L730 320L770 286L766 330Q790 336 794 360Q780 370 736 362Q700 420 640 432Q580 434 544 400ZM596 350Q636 380 624 430M640 376Q650 354 690 362Q680 390 664 374",
      "M292 450Q290 430 310 426L410 406Q436 404 440 424L450 466M292 450L310 494M190 600Q200 520 340 480Q460 450 530 480Q590 510 590 580Q580 650 500 684Q400 710 290 694Q200 670 190 600ZM340 406L328 300Q340 286 384 284Q410 290 402 318Q390 330 366 330L384 404M334 326L366 330M336 360L374 358M338 390L380 386M364 290L376 324M162 620Q130 590 134 560Q150 540 164 566L170 620M188 626Q140 620 144 640Q146 662 180 654L194 650M170 660Q160 700 176 720Q196 720 194 700L180 660",
      "M904 420Q906 400 930 400Q950 404 950 424Q940 450 926 458Q906 446 904 420ZM980 410Q986 376 1012 376Q1046 384 1044 414Q1030 456 1010 458Q984 450 980 410ZM1072 436Q1076 410 1098 412Q1120 416 1118 440Q1108 466 1096 466Q1076 460 1072 436ZM924 550Q930 470 1004 470Q1080 480 1078 564ZM944 476Q890 450 866 516L914 524ZM1070 480Q1130 470 1144 538L1090 540Z",
      "M844 586Q856 600 858 628L908 620Q910 630 876 654L906 696Q890 696 858 682L844 720Q836 710 832 684L790 670Q800 656 830 646Z",
      "M514 810L522 740Q526 720 546 720L660 736Q680 740 684 766L716 762L708 828L674 816Q670 836 656 840L530 826Q514 824 514 810Z",
      "M820 850Q830 790 930 750Q1040 740 1060 820Q1050 900 980 944Q870 980 832 910Q820 890 820 850ZM880 850Q890 810 960 792Q1020 790 1016 830Q1000 890 930 906Q876 900 880 850ZM860 810L886 836M926 756L936 796M1004 752L990 794M1060 816L1016 822M1044 888L1004 866M1000 936L970 900M916 960L924 906M836 914L886 892M928 754Q924 706 942 706Q962 710 960 746M1034 760L1080 720Q1110 710 1112 740Q1110 760 1062 796M838 820Q780 796 778 824Q790 850 824 846M1060 860Q1100 860 1100 884Q1090 896 1044 886M916 960Q910 1016 930 1016Q954 1012 948 960",
      "M1130 570Q1190 580 1200 600M1130 570Q1120 640 1170 674M1168 674Q1164 620 1180 600L1200 574M1166 674Q1160 720 1172 760M1200 680Q1170 710 1180 760Q1130 770 1122 810Q1130 870 1200 890M1180 760L1200 790",
      "M208 820Q200 780 230 780Q256 786 256 820L266 906L276 820Q276 790 304 788Q326 794 322 820L314 960Q340 990 336 1030Q320 1100 240 1104Q180 1100 164 1050L146 970Q120 920 136 904Q160 890 180 930L184 960Q170 972 146 966M170 900Q180 874 210 880L220 930Q210 946 186 940ZM208 820L222 910M210 950Q260 930 290 940L314 966M210 950Q190 980 220 986L260 980Q264 1010 272 1022",
      "M396 924Q400 880 440 878Q490 880 490 930Q480 980 450 992Q410 980 396 924ZM374 1070Q380 1020 430 1008L462 1028L492 992Q560 1000 594 1070Q596 1090 580 1092L394 1142Q374 1140 374 1070Z",
      "M708 1020Q710 1006 770 1024L796 964Q806 950 812 970L810 1026Q860 1034 868 1044Q860 1056 808 1054L822 1112Q816 1124 804 1110L780 1064L740 1104Q724 1100 730 1090L752 1046Z",
      "M0 580Q50 640 54 664Q100 650 104 690Q70 780 0 788M0 860Q20 860 30 890L70 1070Q70 1084 50 1088L0 1100M0 920L38 1050L0 1064M54 960Q80 970 76 1000L64 1016M0 1002L24 1016M172 1260L174 1190Q180 1184 190 1196L220 1240L290 1250M774 1260V1200Q774 1166 810 1164L1040 1160Q1070 1166 1072 1200V1260M1200 940L1110 966Q1080 976 1088 1000L1140 1200Q1150 1220 1200 1208M1200 990Q1160 1010 1156 1060Q1160 1110 1200 1130M1180 1060L1200 1046",
    ],
  },
  {
    at: [800, 955],
    rings: [
      [68, 31, 17], [270, 0, 22], [650, 54, 13], [528, 134, 18], [621, 119, 16], [689, 138, 17], [622, 201, 28],
      [742, 184, 16], [1080, 46, 17], [1117, 109, 14], [1036, 122, 26], [842, 290, 15], [842, 355, 15], [1194, 48, 12],
      [282, 494, 19], [321, 560, 26], [401, 547, 13], [583, 518, 15], [569, 570, 24], [284, 627, 16], [375, 623, 15],
      [294, 686, 17], [297, 765, 21], [963, 590, 17], [1062, 665, 18], [1133, 681, 15], [997, 701, 26], [1138, 770, 22],
      [857, 811, 16], [876, 875, 28], [473, 869, 25], [550, 874, 29], [638, 852, 19], [583, 946, 15], [503, 952, 10],
      [829, 945, 17], [1160, 876, 18], [1160, 972, 20], [137, 928, 14], [229, 922, 16], [203, 978, 11], [146, 1008, 12],
      [180, 1084, 23], [822, 1153, 18], [770, 1178, 11], [767, 1246, 15], [845, 1241, 30], [865, 1306, 15], [305, 1324, 15],
      [824, 1378, 15], [874, 1421, 13], [1110, 1382, 28], [110, 1472, 15], [170, 1476, 16], [278, 1500, 20], [1005, 841, 82],
      [854, 6, 36], [860, 26, 136], [860, 26, 110], [38, 1296, 88], [65, 1274, 26], [65, 1274, 9], [447, 208, 14],
      [549, 1402, 22], [453, 1424, 22], [1200, 1360, 12], [503, 621, 25],
    ],
    dots: [
      [32, 54, 13], [77, 85, 12], [356, 807, 12], [643, 910, 13], [503, 621, 12], [679, 547, 12], [723, 563, 12],
      [753, 526, 12], [781, 558, 12], [806, 528, 12], [172, 602, 13], [558, 1394, 12], [462, 1416, 12], [1192, 514, 8],
    ],
    stars: [[754, 868, 56, 6], [864, 1036, 54, 10], [948, 1362, 54, 6]],
    sparks: [[902, 460, 60, -6], [182, 804, 58, 32]],
    marks: [
      ["camera", 112, 660, -11, 1.02], ["drop", 300, 1250, 16, 0.9], ["drop", 468, 1244, -14, 1], ["drop", 554, 1262, -10, 0.84],
      ["drop", 928, 948, 120, 0.8], ["drop", 1076, 974, -90, 0.9],
    ],
    paths: [
      "M104 0Q130 40 126 92Q60 130 60 200Q60 290 150 300Q200 300 202 282Q200 270 180 280Q140 280 134 230Q140 190 180 160Q230 110 234 50L226 0M126 92Q130 40 110 0M78 310Q160 340 260 330Q350 290 362 200Q360 140 340 100Q330 60 342 20Q336 0 316 30Q280 60 296 120Q310 170 290 190Q240 240 160 166M84 290Q50 330 66 380Q90 440 140 450Q180 430 240 380Q270 370 260 390Q210 480 160 510Q100 530 46 516M128 166Q130 140 160 136L176 142M184 110Q180 76 226 70M134 216Q110 220 112 244Q120 256 140 250M336 90Q310 90 316 110Q330 120 344 116M360 166Q330 170 330 200Q340 214 356 214M338 256Q300 256 294 280V306M204 330Q200 296 234 296Q264 300 266 326M76 410Q70 450 110 460L120 446M150 456Q190 470 192 420M0 418Q50 430 46 500Q40 550 0 566M0 460Q20 466 34 450M0 540Q24 510 36 530",
      "M390 30Q450 20 490 0M390 30Q390 70 450 120L620 0M428 90L560 0M806 116Q840 56 890 56Q930 56 956 94",
      "M418 288Q390 210 406 180Q450 140 490 190Q500 230 470 250Z",
      "M310 370Q306 350 326 346L770 258L796 252L776 306L794 400Q796 420 776 426L360 504Q338 506 330 480ZM374 388Q372 374 388 372Q402 374 404 390L410 420Q408 434 394 434Q382 432 380 420ZM364 430Q370 448 396 446Q420 440 426 420M402 448L406 470M460 372L518 390L472 426ZM544 380L736 342L740 350L546 390ZM690 402L710 412L726 374M716 402L724 408L748 372",
      "M1070 250L940 190Q920 200 950 236Q900 230 892 256Q900 274 950 286Q890 296 898 316Q910 330 958 330Q930 370 944 374L1060 322M1072 256Q1076 210 1090 208L1130 210Q1160 214 1158 262M1042 270Q1046 256 1060 258L1170 266Q1184 280 1170 300L1060 292Q1040 290 1042 270ZM1076 262V290M1106 264V296M1140 266V298M1062 296L1056 330L1010 546Q1010 570 1030 570L1110 574Q1136 570 1138 544L1154 302M1056 330Q1100 350 1150 340M1044 408Q1090 426 1146 416M1024 488Q1070 506 1140 502M1080 392Q1080 364 1100 364Q1116 372 1114 394ZM1068 474Q1070 446 1088 446Q1106 456 1102 478Z",
      "M624 616Q620 530 720 496Q840 480 880 580L900 584Q916 596 908 606Q880 616 830 616L740 644Q720 630 700 640L670 656Q640 640 604 640L624 616Q760 620 880 586M620 674Q740 680 890 630Q920 630 922 644L820 694Q760 690 730 690L620 698Q600 690 620 674ZM922 644L940 670L870 698Q850 720 810 718L740 738Q710 726 690 738Q660 710 644 744Q610 744 620 710L640 702M644 744Q640 780 700 778Q860 760 900 734Q920 714 918 690",
      "M516 640Q560 680 546 740L552 796Q548 800 536 796L390 758Q370 750 378 744Q406 720 420 680Q440 640 486 632M500 690Q500 664 514 668Q530 680 526 710Q520 736 504 726ZM440 780Q450 806 482 788",
      "M974 850L986 800Q990 790 1000 800L1044 826Q1046 838 1016 840L1034 880Q1026 896 1014 886L996 850L980 864Z",
      "M284 880Q360 860 400 890Q460 930 476 1080Q480 1120 440 1130L290 1160Q266 1156 264 1140L242 1010V972Q280 976 276 934Q304 916 284 880ZM354 878Q420 920 446 1126M348 1154L360 1206Q370 1226 386 1222Q400 1216 398 1200L388 1146M290 1000L314 1010L290 1022M380 984L356 996L380 1006M316 1062Q340 1072 378 1052M326 1066Q334 1104 354 1104Q380 1096 374 1056M344 1064L350 1084L360 1060",
      "M528 1030Q536 1010 560 1026Q590 1034 620 1006Q680 980 730 998Q780 1020 768 1080Q750 1110 720 1116Q696 1130 700 1170Q710 1240 686 1260Q650 1280 620 1240Q580 1190 520 1186Q490 1160 540 1120Q544 1080 528 1030Z",
      "M954 1040L976 986Q984 974 996 986L1022 1024Q990 1050 954 1046ZM954 1046Q930 1060 940 1100Q1040 1090 1056 1050Q1050 1030 1022 1028M940 1100Q914 1120 926 1154Q1060 1160 1110 1080Q1120 1050 1100 1044L1060 1050M926 1154Q900 1180 916 1210Q930 1226 956 1224L1150 1140Q1160 1090 1130 1094L1104 1100M956 1224L1020 1310Q1030 1326 1060 1320L1140 1284Q1150 1276 1150 1262V1146M962 1218L976 1206L990 1214L1004 1196L1020 1200L1036 1182L1052 1186L1066 1170L1082 1174L1096 1158L1112 1164L1126 1148L1144 1150",
      "M0 1176L160 1132Q190 1128 200 1150L258 1330Q264 1370 220 1386L232 1440Q226 1450 144 1408L0 1448M0 1330L94 1306Q100 1350 60 1364Q20 1360 0 1330M24 1330L40 1352L46 1324L60 1350L72 1316M0 1282L20 1284M154 1356L176 1368L192 1326M196 1362L214 1320",
      "M0 810L34 792Q46 830 40 866Q20 900 0 914M40 866Q60 840 84 850Q90 900 50 924Q20 930 0 918M0 956Q60 940 84 1020Q90 1110 60 1124L0 1130M0 1030L20 1054",
      "M362 1400Q360 1360 380 1366L424 1382Q460 1350 550 1350Q560 1320 590 1314Q616 1330 612 1380Q650 1450 612 1500M362 1400Q370 1430 388 1440L396 1500M630 1456L700 1446Q740 1430 720 1370Q700 1340 710 1332Q730 1330 750 1390Q756 1440 744 1470L750 1500M492 1440Q500 1424 522 1438L506 1456ZM474 1448Q480 1476 506 1460Q530 1470 544 1440M580 1440L584 1436M594 1428L596 1424M420 1470L424 1474M436 1472L438 1476",
      "M852 1500Q850 1460 880 1458L1066 1440L1050 1500M890 1494L1016 1488V1500M1120 1500Q1150 1500 1160 1470Q1170 1456 1200 1460M30 1500L42 1470",
    ],
  },
];

@customElement("doodle-wallpaper")
export class DoodleWallpaper extends LitElement {
  static styles = css`
    :host {
      display: block;
      overflow: hidden;
    }
    .art {
      display: block;
      width: 100%;
      height: 100%;
      fill: none;
      stroke: #dbd3cd;
      stroke-linecap: round;
      stroke-linejoin: round;
    }
    .dot {
      fill: #dbd3cd;
      stroke: none;
    }
    .word {
      font-family: "Liberation Sans", Arial, sans-serif;
      text-anchor: middle;
    }
  `;

  private tile(t: Tile) {
    const s = t.scale ?? 1 / 3;
    const w = 2.7 / s;
    return svg`<g transform="translate(${t.at[0]} ${t.at[1]}) scale(${s})" stroke-width=${w}>
      ${t.rings.map(([x, y, r]) => svg`<circle cx=${x} cy=${y} r=${r}></circle>`)}
      ${(t.dots ?? []).map(([x, y, r]) => svg`<circle class="dot" cx=${x} cy=${y} r=${r}></circle>`)}
      ${(t.stars ?? []).map(([x, y, r, a]) => svg`<path d=${starPath(x, y, r, a)}></path>`)}
      ${(t.sparks ?? []).map(
        ([x, y, r, a]) => svg`<path transform="translate(${x} ${y}) rotate(${a})" d=${sparkPath(r)}></path>`
      )}
      ${(t.marks ?? []).map(
        ([name, x, y, a, k]) => svg`<path transform="translate(${x} ${y}) rotate(${a}) scale(${k})"
          stroke-width=${w / k} d=${SHAPES[name]}></path>`
      )}
      ${(t.words ?? []).map(
        ([text, x, y, size, a]) => svg`<text class="word" font-size=${size}
          transform="translate(${x} ${y}) rotate(${a})">${text}</text>`
      )}
      ${(t.paths ?? []).map((d) => svg`<path d=${d}></path>`)}
    </g>`;
  }

  render() {
    return html`<svg class="art" viewBox="0 0 1200 1455" preserveAspectRatio="xMidYMin slice" aria-hidden="true">
      ${TILES.map((t) => this.tile(t))}
    </svg>`;
  }
}

@customElement("chat-bubble")
export class ChatBubble extends LitElement {
  @property() text = "";

  static styles = css`
    :host {
      display: block;
      box-sizing: border-box;
      width: 87%;
      padding: 20px 40px;
      border-radius: 30px;
      background: #fff;
      color: #000;
    }
  `;

  render() {
    return html`${this.text}`;
  }
}

@customElement("app-root")
export class AppRoot extends LitElement {
  @state() private draft = "";

  private readonly choices = ["1", "99", "98", "97", "0"];
  private readonly hints = [
    "Select 1 to place an order.",
    "Select 99 to checkout your order.",
    "Select 98 to see your order history.",
    "Select 97 to see your current order",
    "Select 0 to cancel your order.",
  ];

  static styles = css`
    :host {
      display: block;
      padding-left: 32px;
      background: #fff;
      color: #000;
      font: 32px/37px "Liberation Serif", "Times New Roman", serif;
    }
    .page {
      max-width: 1200px;
      margin: 0 auto;
    }
    .title {
      margin: 0;
      padding: 48px 0 43px;
      font-size: 64px;
      line-height: 74px;
      text-align: center;
    }
    .see {
      color: #ea3323;
    }
    .food {
      color: #346fb6;
    }
    .chat {
      position: relative;
      box-sizing: border-box;
      min-height: calc(100vh - 395px);
      padding: 52px 20px 32px;
      background: #e4dcd6;
    }
    .wallpaper {
      position: absolute;
      inset: 0;
    }
    .talk {
      position: relative;
      display: flex;
      flex-direction: column;
      gap: 64px;
    }
    .hints {
      display: flex;
      flex-direction: column;
      gap: 32px;
      margin: 0;
      padding: 0;
      list-style: none;
      color: #808080;
      text-align: center;
    }
    .menu {
      display: flex;
      flex-direction: column;
      gap: 36px;
    }
    .choices {
      display: flex;
      flex-wrap: wrap;
      justify-content: center;
      gap: 20px;
    }
    button,
    input {
      border: 0;
      font-family: "Liberation Sans", Arial, sans-serif;
    }
    .choice {
      padding: 10px 40px;
      border-radius: 6px;
      background: #f3f3f3;
      color: #000;
      font-size: 32px;
      line-height: 37px;
    }
    .composer {
      display: flex;
      justify-content: space-between;
    }
    .message {
      box-sizing: border-box;
      flex: 0 1 892px;
      min-width: 0;
      height: 86px;
      padding: 0 4px 2px;
      border-bottom: 2px solid #f3f3f3;
      outline: none;
      background: transparent;
      color: #000;
      font-size: 32px;
    }
    .message::placeholder {
      color: #757575;
      opacity: 1;
    }
    .send {
      width: 160px;
      padding: 0 0 2px;
      border-radius: 10px;
      background: #3b7d23;
      color: #fff;
      font-size: 27px;
    }
    .rule {
      margin: 47px 0 32px;
      border: 2px solid;
      border-color: #9a9a9a #eee #eee #9a9a9a;
    }
    .footer {
      text-align: center;
    }
    .credit {
      margin: 0;
      padding-bottom: 16px;
    }
    .author {
      color: #4b2188;
      text-decoration-thickness: 2px;
    }
  `;

  private onInput(e: Event) {
    this.draft = (e.target as HTMLInputElement).value;
  }

  private onSubmit(e: Event) {
    e.preventDefault();
    this.draft = "";
  }

  render() {
    return html`
      <div class="page">
        <header>
          <h1 class="title"><span class="see">See</span><span class="food">Food</span></h1>
        </header>
        <main>
          <section class="chat">
            <doodle-wallpaper class="wallpaper"></doodle-wallpaper>
            <div class="talk">
              <chat-bubble
                text="Hello Onyedikachi Onu and Welcome to SeeFood, the best place for your Hotdog and Not Hotdog meals."
              ></chat-bubble>
              <div class="menu">
                <ul class="hints">
                  ${this.hints.map((h) => html`<li>${h}</li>`)}
                </ul>
                <div class="choices">
                  ${this.choices.map((c) => html`<button class="choice" type="button">${c}</button>`)}
                </div>
              </div>
            </div>
          </section>
          <form class="composer" @submit=${this.onSubmit}>
            <input
              class="message"
              type="text"
              aria-label="Message"
              placeholder="Type your messages..."
              .value=${this.draft}
              @input=${this.onInput}
            />
            <button class="send" type="submit">Send</button>
          </form>
        </main>
        <hr class="rule" />
        <footer class="footer">
          <p class="credit">Built by <a class="author" href="#">Onu Onyedikachi</a> © 2023. All rights reserved</p>
        </footer>
      </div>
    `;
  }
}
